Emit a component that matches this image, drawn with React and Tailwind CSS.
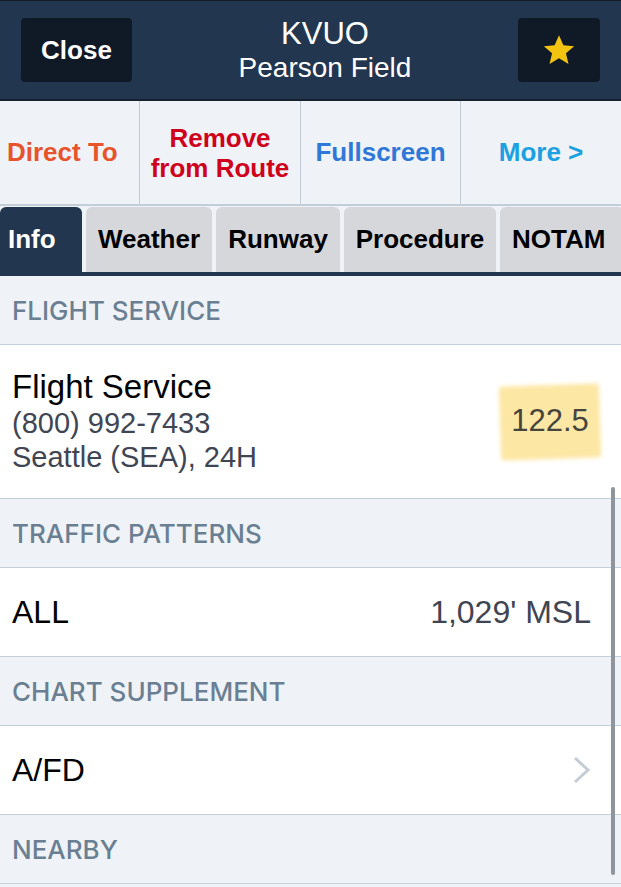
import React from 'react';

const font = { fontFamily: '"Liberation Sans", Arial, sans-serif' };
const headFont = { fontFamily: 'Inter, "Liberation Sans", Arial, sans-serif' };

const SectionHeader = ({ title }) => (
  <div className="h-[69px] flex items-center px-3 bg-[#eff3f7] border-b border-[#c5cfd9]">
    <span style={headFont} className="text-[26px] font-medium text-[#6b7f93]">{title}</span>
  </div>
);

const tabs = [
  { label: 'Info', w: 'w-[82px] justify-start pl-[8px]', active: true },
  { label: 'Weather', w: 'w-[126px] justify-center' },
  { label: 'Runway', w: 'w-[124px] justify-center' },
  { label: 'Procedure', w: 'w-[152px] justify-center' },
  { label: 'NOTAM', w: 'w-[124px] justify-start pl-[12px]' },
];

export default function App() {
  return (
    <div style={font} className="w-[621px] h-[887px] overflow-hidden bg-[#eff3f7] relative">
      {/* header */}
      <div className="h-[101px] bg-[#22364f] border-t border-[#121c28] border-b-2 border-b-[#16222f] flex items-center justify-between px-[21px]">
        <button className="w-[111px] h-[64px] rounded-[4px] bg-[#101a26] text-white text-[26px] font-bold">
          Close
        </button>
        <div className="flex flex-col items-center text-white leading-none -mt-[1px]">
          <span className="text-[31px]">KVUO</span>
          <span className="text-[28px] mt-[5px]">Pearson Field</span>
        </div>
        <button className="w-[82px] h-[64px] rounded-[4px] bg-[#101a26] flex items-center justify-center">
          <svg width="34" height="34" viewBox="0 0 24 24">
            <path d="M12 1.5l3.1 7.2 7.6.6-5.8 5 1.8 7.5L12 17.8 5.3 21.8l1.8-7.5-5.8-5 7.6-.6z" fill="#f2c40f" />
          </svg>
        </button>
      </div>

      {/* actions */}
      <div className="h-[105px] flex bg-[#eff3f7] border-b-2 border-[#c3cdd8]">
        <div className="w-[140px] flex items-center pl-[7px] border-r border-[#c0ccd8] text-[26px] font-bold text-[#e8532b]">
          Direct To
        </div>
        <div className="w-[161px] flex items-center justify-center border-r border-[#c0ccd8] text-[26px] font-bold text-[#d0021b] text-center leading-[30px]">
          Remove<br />from Route
        </div>
        <div className="w-[160px] flex items-center justify-center border-r border-[#c0ccd8] text-[26px] font-bold text-[#2f78d8]">
          Fullscreen
        </div>
        <div className="flex-1 flex items-center justify-center text-[26px] font-bold text-[#1ba0e2]">
          More &gt;
        </div>
      </div>

      {/* tabs */}
      <div className="h-[70px] flex items-end gap-[4px] bg-[#eff3f7] border-b-[4px] border-[#22364f] overflow-hidden">
        {tabs.map((t) => (
          <div
            key={t.label}
            className={`${t.w} shrink-0 h-[65px] rounded-t-[6px] flex items-center text-[26px] font-bold ${
              t.active ? 'bg-[#22364f] text-white' : 'bg-[#d6d7db] text-black'
            }`}
          >
            {t.label}
          </div>
        ))}
      </div>

      <SectionHeader title="FLIGHT SERVICE" />
      <div className="h-[154px] bg-white border-b border-[#c5cfd9] flex items-center justify-between pl-3 pr-[21px]">
        <div className="flex flex-col leading-none -mt-[2px]">
          <span className="text-[33px] text-black">Flight Service</span>
          <span className="text-[29px] text-[#3f4553] mt-[6px]">(800) 992-7433</span>
          <span className="text-[29px] text-[#3f4553] mt-[5px]">Seattle (SEA), 24H</span>
        </div>
        <div className="relative w-[100px] h-[74px] flex items-center justify-center">
          <div className="absolute inset-0 bg-[#fde7a4] rounded-[3px] blur-[2px] -rotate-[2deg]" />
          <span className="relative text-[31px] text-[#45453e]">122.5</span>
        </div>
      </div>

      <SectionHeader title="TRAFFIC PATTERNS" />
      <div className="h-[89px] bg-white border-b border-[#c5cfd9] flex items-center justify-between pl-3 pr-[30px]">
        <span className="text-[32px] text-black">ALL</span>
        <span className="text-[32px] text-[#3f4553]">1,029' MSL</span>
      </div>

      <SectionHeader title="CHART SUPPLEMENT" />
      <div className="h-[89px] bg-white border-b border-[#c5cfd9] flex items-center justify-between pl-3 pr-[30px]">
        <span className="text-[32px] text-black">A/FD</span>
        <svg width="18" height="28" viewBox="0 0 18 28">
          <path d="M2 2l13 12-13 12" fill="none" stroke="#c4ccd6" strokeWidth="3" />
        </svg>
      </div>

      <SectionHeader title="NEARBY" />

      {/* scrollbar */}
      <div className="absolute right-[6px] top-[487px] w-[4px] h-[388px] rounded-full bg-[#8f959c]" />
    </div>
  );
}
